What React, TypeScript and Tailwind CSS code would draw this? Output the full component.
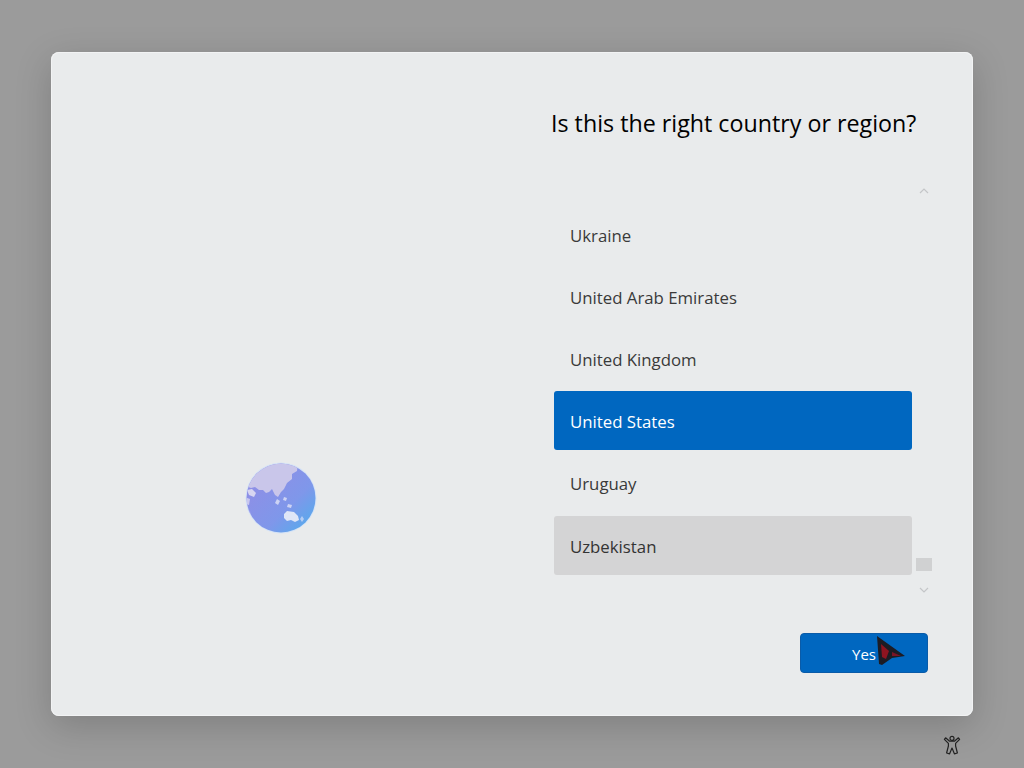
const COUNTRIES = ['Ukraine', 'United Arab Emirates', 'United Kingdom', 'United States', 'Uruguay', 'Uzbekistan'];

function Globe() {
  return (
    <svg width="72" height="72" viewBox="0 0 72 72">
      <defs>
        <linearGradient id="ocean" x1="0.2" y1="0.2" x2="0.9" y2="0.9">
          <stop offset="0" stopColor="#8e8fe6" />
          <stop offset="0.6" stopColor="#7f97ea" />
          <stop offset="1" stopColor="#5aa9ec" />
        </linearGradient>
        <clipPath id="disc">
          <circle cx="36" cy="36" r="34.5" />
        </clipPath>
      </defs>
      <circle cx="36" cy="36" r="35.5" fill="#d5e3f6" />
      <circle cx="36" cy="36" r="34.5" fill="url(#ocean)" />
      <g clipPath="url(#disc)">
        <path
          d="M0 0H53L52 9L47 12L47 17L42 21L39 27L36 30L33 35L30 33L27 27L24 30L21 31L18 28L14 28L10 25L6 26L0 24Z"
          fill="#c9c6ea"
        />
        <path d="M2 28L7 27L11 31L9 35L4 33Z" fill="#d8d6f1" />
        <path d="M0 35L5 37L4 43L0 42Z" fill="#c9c7ef" />
        <path d="M1 47L5 49L6 54L2 53Z" fill="#aaa9ec" />
        <path d="M32 37L35 39L33 43L30 41Z" fill="#cdd3f4" />
        <path d="M39 35L42 36L41 39L38 38Z" fill="#cdd3f4" />
        <path d="M43 42L47 43L46 46L42 45Z" fill="#cdd3f4" />
        <path d="M39 52L42 49L49 50L53 54L54 58L50 60L46 58L42 59L39 56Z" fill="#dfe6f7" />
        <path d="M57 54L59 57L57 60L55 57Z" fill="#b5cdf4" />
      </g>
    </svg>
  );
}

function AccessibilityIcon() {
  return (
    <svg width="20" height="20" viewBox="0 0 20 20" fill="none" stroke="#222222" strokeWidth="1.2" strokeLinejoin="round">
      <circle cx="10" cy="3.4" r="2" />
      <path d="M2.4 4.4L3.6 2.8L7.6 6.2H12.4L16.4 2.8L17.6 4.4L13.6 8.4V11L15.4 18L12.4 18.8L10 13L7.6 18.8L4.6 18L6.4 11V8.4Z" />
    </svg>
  );
}

function Cursor() {
  return (
    <svg className="absolute left-[75px] top-[1px]" width="32" height="32" viewBox="0 0 32 32">
      <path d="M1 1L29 21L16 23L6 30L3 29Z" fill="#1c1c24" />
      <path d="M5 9L13 16L10 24L6 22Z" fill="#8e1420" />
      <path d="M16 17L25 21L16 21Z" fill="#7a1526" />
    </svg>
  );
}

export default function App() {
  return (
    <div className="h-[768px] w-[1024px] overflow-hidden bg-[#9b9b9b] pl-[51px] pt-[52px] font-['Open_Sans','Noto_Sans',sans-serif]">
      <div className="flex h-[664px] w-[922px] rounded-lg bg-[#e9ebec] shadow-[0_10px_36px_rgba(0,0,0,0.18),inset_0_0_0_1px_#f2f3f4]">
        <div className="w-[500px] pl-[194px] pt-[410px]">
          <Globe />
        </div>
        <div className="flex w-[422px] flex-col pt-[55px]">
          <h1 className="text-[23.25px] leading-8 font-normal whitespace-nowrap text-black">Is this the right country or region?</h1>
          <div className="mt-[43px] flex h-[416px] items-stretch">
            <div className="ml-[3px] flex w-[358px] shrink-0 flex-col gap-[3px] pt-[23px]">
              {COUNTRIES.map((name) => (
                <div
                  key={name}
                  className={`flex h-[59px] items-center rounded-[3px] px-4 pt-[2px] text-[16.8px] ${
                    name === 'United States'
                      ? 'bg-[#0067c0] text-white'
                      : name === 'Uzbekistan'
                        ? 'mt-[1px] bg-[#d4d4d5] text-[#333333]'
                        : 'text-[#3a3a3a]'
                  }`}
                >
                  {name}
                </div>
              ))}
            </div>
            <div className="ml-[4px] flex w-[16px] shrink-0 flex-col items-center">
              <svg className="mt-[6px]" width="10" height="6" viewBox="0 0 10 6" fill="none" stroke="#c4c6c8" strokeWidth="1.2">
                <path d="M1 5L5 1L9 5" />
              </svg>
              <div className="mt-[364px] h-[13px] w-[16px] bg-[#d0d1d2]" />
              <svg className="mt-[16px]" width="10" height="6" viewBox="0 0 10 6" fill="none" stroke="#c4c6c8" strokeWidth="1.2">
                <path d="M1 1L5 5L9 1" />
              </svg>
            </div>
          </div>
          <button className="relative mt-[35px] mr-[45px] h-10 w-32 self-end rounded-[4px] border border-[#0a5ba8] bg-[#0067c0] pt-[3px] text-[15px] text-white">
            Yes
            <Cursor />
          </button>
        </div>
      </div>
      <div className="flex w-[911px] justify-end pt-[19px]">
        <AccessibilityIcon />
      </div>
    </div>
  );
}
